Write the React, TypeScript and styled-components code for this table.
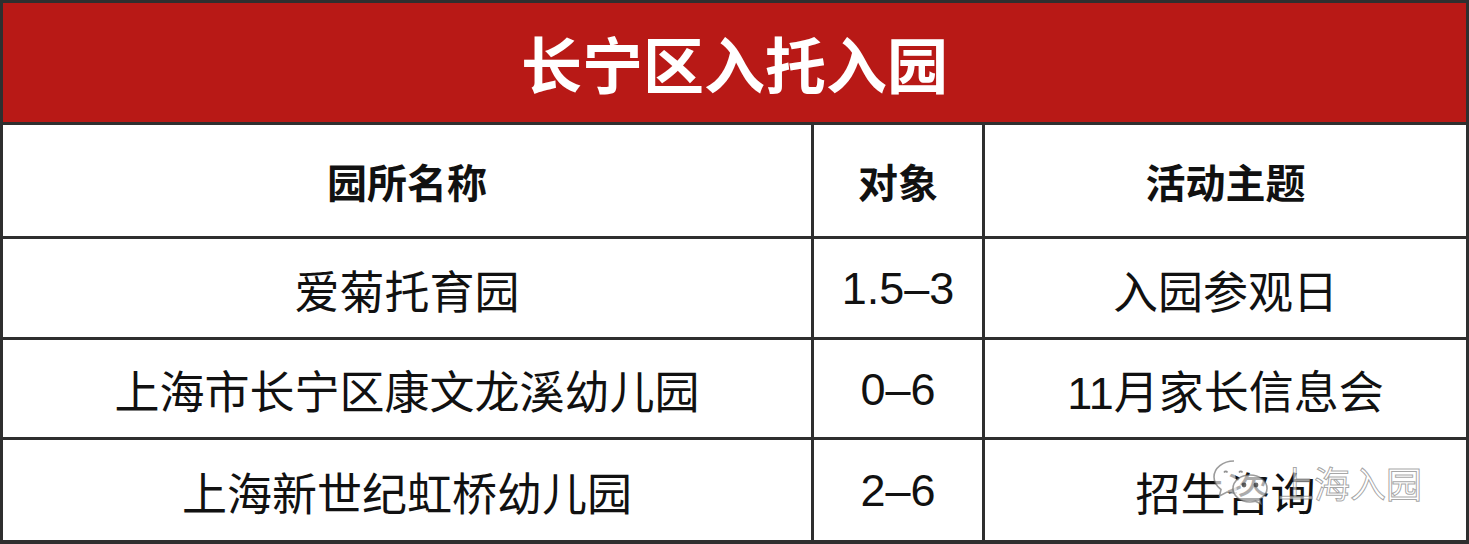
import styled, { createGlobalStyle } from "styled-components";

const Global = createGlobalStyle`
    html, body {
        margin: 0;
        padding: 0;
        background: #ffffff;
    }
    body {
        font-family: "Liberation Sans", "Noto Sans CJK SC", sans-serif;
    }
`;

const Board = styled.div`
    position: relative;
    width: 1469px;
    height: 544px;
    box-sizing: border-box;
    padding: 3px 3px 4px 3px;
    background: #2f2f2f;
    display: grid;
    grid-template-columns: 808px 168px 481px;
    grid-template-rows: 119px 111px 98px 97px 100px;
    gap: 3px;
`;

const Title = styled.div`
    grid-column: 1 / -1;
    background: #b81916;
    color: #ffffff;
    font-size: 61px;
    font-weight: 700;
    display: flex;
    align-items: center;
    justify-content: center;
`;

const Cell = styled.div<{ $head?: boolean }>`
    background: #ffffff;
    color: #111111;
    display: flex;
    align-items: center;
    justify-content: center;
    font-size: ${(p) => (p.$head ? "40px" : "45px")};
    font-weight: ${(p) => (p.$head ? 700 : 400)};
    padding-top: ${(p) => (p.$head ? "0" : "2px")};
    box-sizing: border-box;
`;

const Mark = styled.div`
    position: absolute;
    left: 1212px;
    top: 456px;
    display: flex;
    align-items: center;
    gap: 8px;
    font-size: 36px;
    pointer-events: none;
`;

const MarkText = styled.span`
    color: rgba(255, 255, 255, 0.6);
    -webkit-text-stroke: 1px rgba(90, 90, 90, 0.55);
`;

const rows = [
    ["爱菊托育园", "1.5–3", "入园参观日"],
    ["上海市长宁区康文龙溪幼儿园", "0–6", "11月家长信息会"],
    ["上海新世纪虹桥幼儿园", "2–6", "招生咨询"],
];

function WeChatIcon() {
    return (
        <svg width="58" height="46" viewBox="0 0 58 46" fill="none">
            <path
                d="M22 2C11 2 2 9 2 18c0 5 3 9.5 7 12.5L7.5 37l7.5-4c2.2.6 4.5 1 7 1 1 0 2-.1 3-.2"
                stroke="rgba(90,90,90,0.6)"
                strokeWidth="1.6"
                fill="rgba(255,255,255,0.65)"
            />
            <path d="M12 13.5c1-1.5 2.5-1.5 3.5 0M27 13.5c1-1.5 2.5-1.5 3.5 0" stroke="rgba(70,70,70,0.6)" strokeWidth="1.6" />
            <path
                d="M38 16c-9.5 0-17 6-17 13.5S28.5 43 38 43c2 0 3.8-.3 5.5-.8L49 45l-1.2-5C52.5 37.5 55 33.8 55 29.5 55 22 47.5 16 38 16Z"
                stroke="rgba(90,90,90,0.6)"
                strokeWidth="1.6"
                fill="rgba(255,255,255,0.65)"
            />
            <circle cx="32" cy="26" r="2.4" fill="rgba(40,40,40,0.7)" />
            <circle cx="44" cy="26" r="2.4" fill="rgba(40,40,40,0.7)" />
        </svg>
    );
}

export default function App() {
    return (
        <>
            <Global />
            <Board>
                <Title>长宁区入托入园</Title>
                <Cell $head>园所名称</Cell>
                <Cell $head>对象</Cell>
                <Cell $head>活动主题</Cell>
                {rows.map((r) =>
                    r.map((c, i) => <Cell key={r[0] + i}>{c}</Cell>),
                )}
                <Mark>
                    <WeChatIcon />
                    <MarkText>上海入园</MarkText>
                </Mark>
            </Board>
        </>
    );
}
